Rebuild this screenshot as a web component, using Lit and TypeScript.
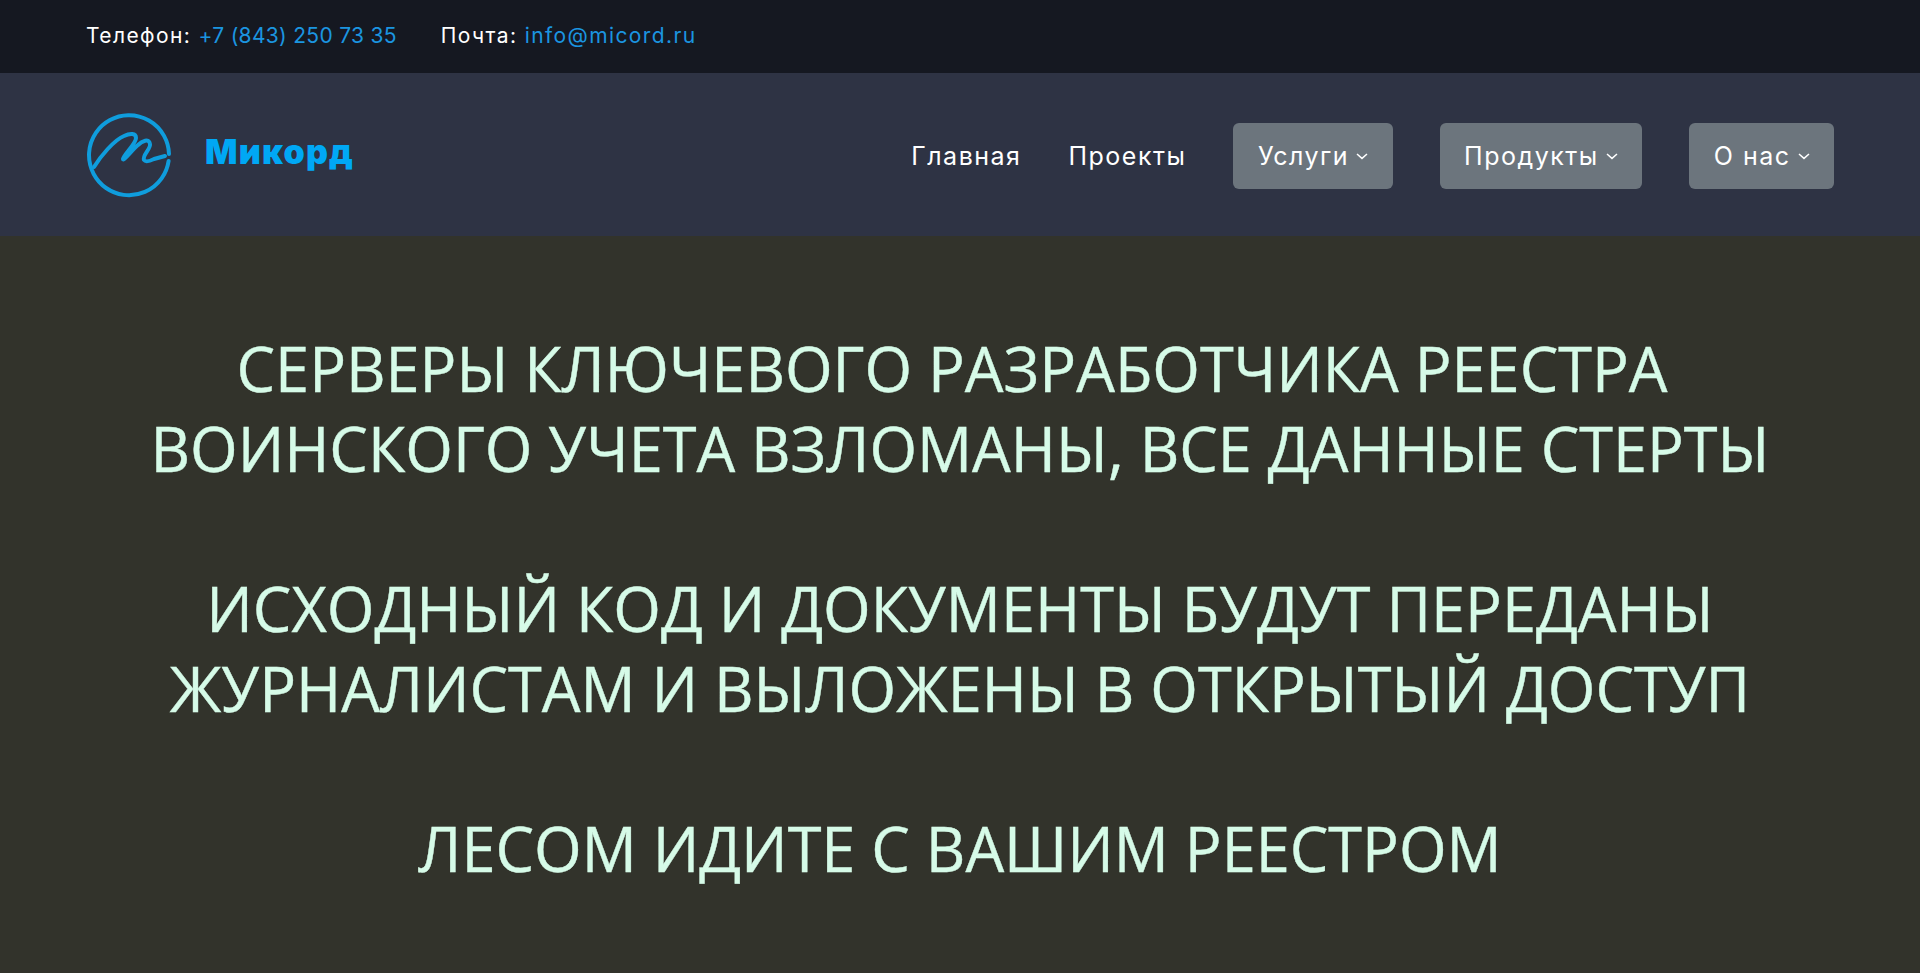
import { LitElement, html, css } from "lit";
import { customElement } from "lit/decorators.js";

const chevron = html`<svg class="chev" viewBox="0 0 12 7" width="12" height="7" fill="none" stroke="currentColor" stroke-width="1.5"><path d="M1 1l5 4.4L11 1"/></svg>`;

@customElement("app-root")
export class AppRoot extends LitElement {
  static styles = css`
    :host {
      display: block;
      height: 973px;
      overflow: hidden;
      background: #32332b;
      font-family: Inter, "Noto Sans", sans-serif;
    }
    .top {
      height: 73px;
      box-sizing: border-box;
      background: #151821;
      padding: 0 86px 3px;
      display: flex;
      align-items: center;
      gap: 44px;
      color: #fff;
      font-size: 21px;
      letter-spacing: 1.4px;
    }
    .top a {
      color: #1b95e0;
    }
    .top a.phone {
      letter-spacing: 0.3px;
    }
    .nav {
      height: 163px;
      box-sizing: border-box;
      background: #2e3344;
      padding: 0 86px;
      display: flex;
      align-items: center;
      justify-content: space-between;
    }
    .brand {
      display: flex;
      align-items: center;
      gap: 33px;
      color: #00a8f5;
      font-size: 34px;
      font-weight: 900;
      letter-spacing: 1.2px;
    }
    .brand svg {
      margin-top: 2px;
    }
    .brand span {
      margin-top: -6px;
    }
    .links {
      display: flex;
      align-items: center;
      gap: 47px;
      padding-top: 3px;
      color: #fff;
      font-size: 25px;
      letter-spacing: 1.5px;
    }
    .btn {
      height: 66px;
      box-sizing: border-box;
      padding: 0 24.5px;
      display: flex;
      align-items: center;
      gap: 7px;
      background: #6c757d;
      border-radius: 6px;
    }
    .hero {
      padding-top: 93px;
      display: flex;
      flex-direction: column;
      align-items: center;
      gap: 80px;
      color: #d6fbe8;
      font-family: "Open Sans", sans-serif;
      font-size: 61.25px;
      line-height: 80px;
      text-align: center;
      -webkit-text-stroke: 0.4px #d6fbe8;
    }
    p {
      margin: 0;
    }
  `;

  render() {
    return html`
      <div class="top">
        <div>Телефон: <a class="phone">+7 (843) 250 73 35</a></div>
        <div>Почта: <a>info@micord.ru</a></div>
      </div>
      <div class="nav">
        <div class="brand">
          <svg width="86" height="86" viewBox="0 0 86 86" fill="none" stroke="#0f9ddd" stroke-width="4" stroke-linecap="round" stroke-linejoin="round">
            <path d="M82.6 48A40 40 0 1 1 83 41"/>
            <path d="M8 54C14 44 28 27 38 23C44 20 50 20 50 25C50 31 38 41 37 46C37 49 46 37 52 32C56 28 63 25 64 31C65 36 56 42 58 47C60 50 66 47 68 46L79 43"/>
          </svg>
          <span>Микорд</span>
        </div>
        <div class="links">
          <span>Главная</span>
          <span>Проекты</span>
          <span class="btn">Услуги ${chevron}</span>
          <span class="btn">Продукты ${chevron}</span>
          <span class="btn">О нас ${chevron}</span>
        </div>
      </div>
      <div class="hero">
        <p>СЕРВЕРЫ КЛЮЧЕВОГО РАЗРАБОТЧИКА РЕЕСТРА&nbsp;<br />ВОИНСКОГО УЧЕТА ВЗЛОМАНЫ, ВСЕ ДАННЫЕ СТЕРТЫ</p>
        <p>ИСХОДНЫЙ КОД И ДОКУМЕНТЫ БУДУТ ПЕРЕДАНЫ<br />ЖУРНАЛИСТАМ И ВЫЛОЖЕНЫ В ОТКРЫТЫЙ ДОСТУП</p>
        <p>ЛЕСОМ ИДИТЕ С ВАШИМ РЕЕСТРОМ</p>
      </div>
    `;
  }
}
